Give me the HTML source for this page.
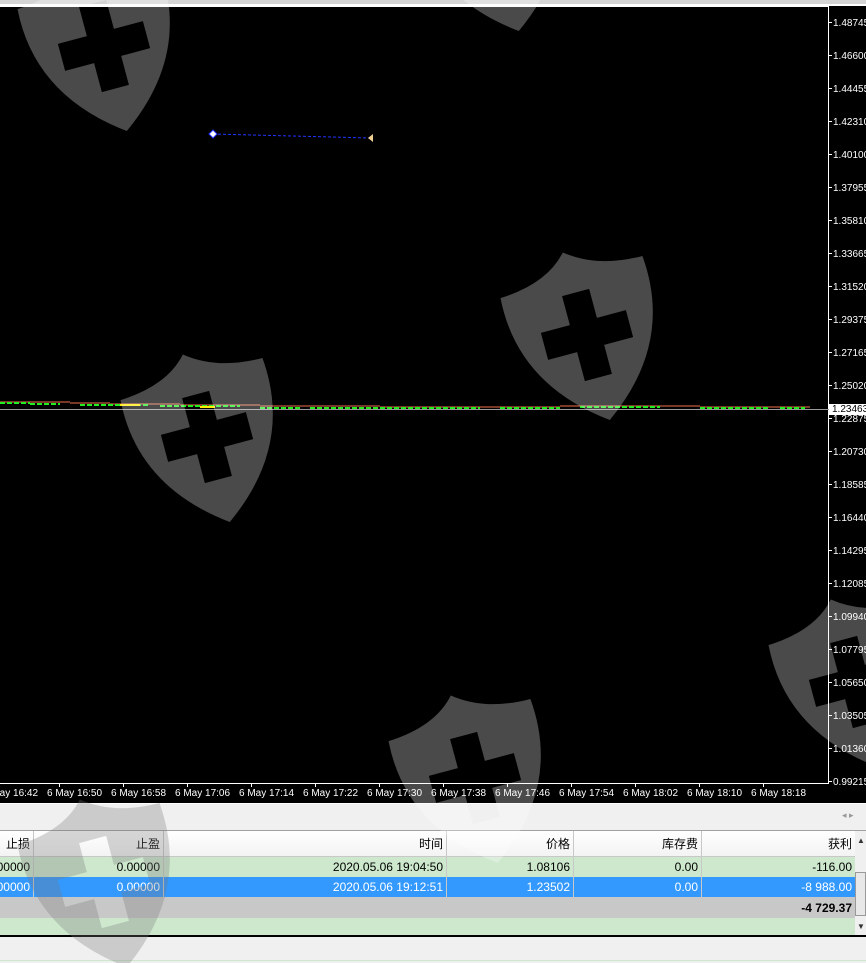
<!DOCTYPE html>
<html><head><meta charset="utf-8"><style>
*{margin:0;padding:0;box-sizing:border-box}
body{width:866px;height:963px;position:relative;overflow:hidden;background:#f0f0f0;font-family:"Liberation Sans","Noto Sans CJK SC",sans-serif}
.abs{position:absolute}
.yl{position:absolute;left:833px;font-size:10px;color:#fff;white-space:nowrap;line-height:10px}
.yt{position:absolute;left:828px;width:4px;height:1px;background:#fff}
.xl{position:absolute;top:788px;font-size:10px;color:#fff;white-space:nowrap}
.xt{position:absolute;top:783px;width:1px;height:4px;background:#fff}
.row{position:absolute;left:0;width:855px;font-size:12px}
.c{position:absolute;text-align:right;top:0;height:100%;padding-right:3px;border-right:1px solid #c8c8c8;display:flex;align-items:center;justify-content:flex-end}
</style></head><body>
<div class="abs" style="left:0;top:0;width:866px;height:4px;background:#d4d4d4"></div>
<div class="abs" style="left:0;top:4px;width:866px;height:2px;background:#fff"></div>
<div class="abs" style="left:0;top:6px;width:866px;height:797px;background:#000"></div>
<div class="abs" style="left:828px;top:6px;width:1px;height:777px;background:#fff"></div>
<div class="abs" style="left:0;top:6px;width:828px;height:1px;background:#fff"></div>
<div class="abs" style="left:0;top:783px;width:829px;height:1px;background:#fff"></div>
<div id="ax"></div>
<div class="abs" style="left:0;top:409px;width:830px;height:1px;background:#9a9a9a"></div>
<svg class="abs" style="left:0;top:395px" width="830" height="20">
<path d="M0 7 H70 M70 8 H110 M110 9 H180 M180 10 H260 M260 11 H380 M380 12 H560 M560 11 H700 M700 12 H810" stroke="#f07050" stroke-width="1" fill="none"/>
<path d="M0 8 H30 M30 9 H60 M80 10 H150 M160 11 H240 M260 13 H300 M310 13 H480 M500 13 H560 M580 12 H660 M700 13 H770 M780 13 H805" stroke="#22ee22" stroke-width="2" stroke-dasharray="5 2" fill="none"/>
<path d="M120 10 H140 M200 12 H215" stroke="#ffee00" stroke-width="2"/>
</svg>
<div class="abs" style="left:829px;top:404px;width:37px;height:11px;background:#fff;color:#000;font-size:10px;line-height:11px;padding-left:3px">1.23463</div>
<svg class="abs" style="left:205px;top:128px" width="175" height="16">
<path d="M8 6 L165 10" stroke="#2233ff" stroke-dasharray="3 2" fill="none"/>
<path d="M4 6 L8 2 L12 6 L8 10 Z" fill="#fff" stroke="#2233ff"/>
<path d="M168 6 L163 10 L168 14 Z" fill="#f0d090"/>
</svg>
<div class="abs" style="left:0;top:803px;width:866px;height:27px;background:#f0f0f0;border-top:1px solid #fff"></div>
<div class="abs" style="left:842px;top:810px;font-size:9px;color:#999">◂ ▸</div>
<div class="abs" style="left:0;top:830px;width:866px;height:1px;background:#a0a0a0"></div>
<div class="row" style="top:831px;height:26px;background:linear-gradient(#fff,#f3f3f3);border-bottom:1px solid #c8c8c8">
<div class="c" style="left:0;width:34px">止损</div>
<div class="c" style="left:34px;width:130px">止盈</div>
<div class="c" style="left:164px;width:283px">时间</div>
<div class="c" style="left:447px;width:127px">价格</div>
<div class="c" style="left:574px;width:128px">库存费</div>
<div class="c" style="left:702px;width:153px;border:none">获利</div>
</div>
<div class="row" style="top:857px;height:20px;background:#cde8cd">
<div class="c" style="left:0;width:34px">00000</div>
<div class="c" style="left:34px;width:130px">0.00000</div>
<div class="c" style="left:164px;width:283px">2020.05.06 19:04:50</div>
<div class="c" style="left:447px;width:127px">1.08106</div>
<div class="c" style="left:574px;width:128px">0.00</div>
<div class="c" style="left:702px;width:153px;border:none">-116.00</div>
</div>
<div class="row" style="top:877px;height:20px;background:#3399ff;color:#fff">
<div class="c" style="left:0;width:34px">00000</div>
<div class="c" style="left:34px;width:130px">0.00000</div>
<div class="c" style="left:164px;width:283px">2020.05.06 19:12:51</div>
<div class="c" style="left:447px;width:127px">1.23502</div>
<div class="c" style="left:574px;width:128px">0.00</div>
<div class="c" style="left:702px;width:153px;border:none">-8 988.00</div>
</div>
<div class="row" style="top:897px;height:21px;background:#c8c8c8;font-weight:bold">
<div class="c" style="left:702px;width:153px;border:none">-4 729.37</div>
</div>
<div class="row" style="top:918px;height:17px;background:#cde8cd"></div>
<div class="abs" style="left:0;top:935px;width:866px;height:2px;background:#000"></div>
<div class="abs" style="left:855px;top:831px;width:11px;height:104px;background:#f0f0f0"></div>
<div class="abs" style="left:857px;top:836px;font-size:8px;color:#333">▲</div>
<div class="abs" style="left:855px;top:872px;width:11px;height:44px;background:#e8e8e8;border:1px solid #999"></div>
<div class="abs" style="left:857px;top:922px;font-size:8px;color:#333">▼</div>
<div class="abs" style="left:0;top:960px;width:866px;height:1px;background:#cde8cd"></div>
<svg class="abs" style="left:0;top:0" width="866" height="963">
<defs><path id="sh" fill-rule="evenodd" d="M-74,-58 Q-25,-60 -2,-86 Q28,-62 74,-62 Q82,30 0,88 Q-80,30 -74,-58 Z M-14,-44 H14 V-14 H44 V14 H14 V44 H-14 V14 H-44 V-14 H-14 Z"/></defs>
<g fill="#fff" fill-opacity="0.29">
<use href="#sh" transform="translate(104,46) rotate(-15)"/>
<use href="#sh" transform="translate(496,-54) rotate(-15)"/>
<use href="#sh" transform="translate(587,335) rotate(-15)"/>
<use href="#sh" transform="translate(207,437) rotate(-15)"/>
<use href="#sh" transform="translate(855,682) rotate(-15)"/>
<use href="#sh" transform="translate(475,778) rotate(-15)"/>
</g>
<g fill="#777" fill-opacity="0.3">
<use href="#sh" transform="translate(104,882) rotate(-15)"/>
</g>
</svg>
<script>
var v=["1.48745","1.46600","1.44455","1.42310","1.40100","1.37955","1.35810","1.33665","1.31520","1.29375","1.27165","1.25020","","1.22875","1.20730","1.18585","1.16440","1.14295","1.12085","1.09940","1.07795","1.05650","1.03505","1.01360","0.99215"];
var h="";var ys=[22,55,88,121,154,187,220,253,286,319,352,385,0,418,451,484,517,550,583,616,649,682,715,748,781];
for(var i=0;i<v.length;i++){if(!v[i])continue;h+='<div class="yt" style="top:'+ys[i]+'px"></div><div class="yl" style="top:'+(ys[i]-3)+'px">'+v[i]+'</div>';}
var t=["16:42","16:50","16:58","17:06","17:14","17:22","17:30","17:38","17:46","17:54","18:02","18:10","18:18"];
for(var j=0;j<t.length;j++){var x=-17+64*j;h+='<div class="xt" style="left:'+(x+12)+'px"></div><div class="xl" style="left:'+x+'px">6 May '+t[j]+'</div>';}
document.getElementById("ax").innerHTML=h;
</script>
</body></html>
